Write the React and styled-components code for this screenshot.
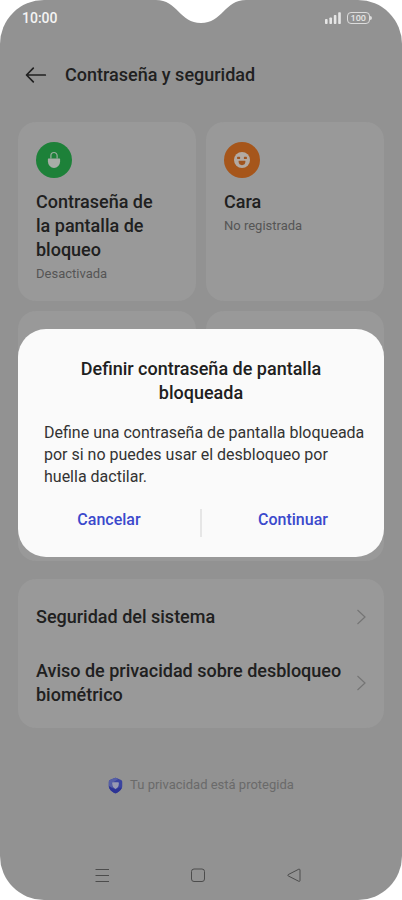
import styled, { createGlobalStyle } from "styled-components";

export default function App() {
  return (
    <>
      <GlobalStyle />
      <Screen>
        <Notch viewBox="0 0 100 24" aria-hidden="true">
          <path
            d="M5 0C26 0 29 23 50 23C71 23 74 0 95 0Z"
            fill="#fff"
          />
        </Notch>
        <StatusBar>
          <span>10:00</span>
          <StatusIcons>
            <Signal />
            <Battery>100</Battery>
          </StatusIcons>
        </StatusBar>
        <Header>
          <IconButton aria-label="Atrás">
            <ArrowLeft />
          </IconButton>
          <h1>Contraseña y seguridad</h1>
        </Header>
        <Main>
          <Grid>
            <MethodCard>
              <Round $color="#1d8139">
                <LockIcon />
              </Round>
              <h2>Contraseña de la pantalla de bloqueo</h2>
              <p>Desactivada</p>
            </MethodCard>
            <MethodCard>
              <Round $color="#a6561b">
                <FaceIcon />
              </Round>
              <h2>Cara</h2>
              <p>No registrada</p>
            </MethodCard>
            <Card />
            <Card />
            <WideCard />
          </Grid>
          <List>
            <Row href="#sistema">
              <span>Seguridad del sistema</span>
              <Chevron />
            </Row>
            <Row href="#privacidad">
              <span>Aviso de privacidad sobre desbloqueo biométrico</span>
              <Chevron />
            </Row>
          </List>
        </Main>
        <Privacy>
          <Shield />
          <span>Tu privacidad está protegida</span>
        </Privacy>
        <NavBar>
          <IconButton aria-label="Recientes">
            <svg width="16" height="16" viewBox="0 0 16 16" stroke="#4c4c4c">
              <path d="M1.5 2.5H15M1.5 8.5H15M1.5 14.5H15" />
            </svg>
          </IconButton>
          <IconButton aria-label="Inicio">
            <svg width="16" height="16" viewBox="0 0 16 16" fill="none" stroke="#4c4c4c">
              <rect x="1.5" y="2" width="13" height="12.5" rx="2.5" />
            </svg>
          </IconButton>
          <IconButton aria-label="Volver">
            <svg width="16" height="16" viewBox="0 0 16 16" fill="none" stroke="#4c4c4c">
              <path d="M12.8 2.2L2.2 7.6Q1.3 8.2 2.2 8.9L12.8 14.3Q14 14.6 14 13.5V3Q14 1.9 12.8 2.2Z" />
            </svg>
          </IconButton>
        </NavBar>
        <Overlay>
          <Dialog role="dialog" aria-labelledby="dialog-title">
            <h2 id="dialog-title">Definir contraseña de pantalla bloqueada</h2>
            <p>
              Define una contraseña de pantalla bloqueada por si no puedes usar
              el desbloqueo por huella dactilar.
            </p>
            <Actions>
              <ActionButton>Cancelar</ActionButton>
              <Divider />
              <ActionButton>Continuar</ActionButton>
            </Actions>
          </Dialog>
        </Overlay>
      </Screen>
    </>
  );
}

const Signal = () => (
  <svg width="16" height="12" viewBox="0 0 16 12" fill="#e6e6e6" aria-hidden="true">
    <rect x="0" y="7" width="2.6" height="5" rx="0.8" />
    <rect x="4.4" y="5.5" width="2.6" height="6.5" rx="0.8" />
    <rect x="8.8" y="3" width="2.6" height="9" rx="0.8" />
    <rect x="13.2" y="0.3" width="2.6" height="11.7" rx="0.8" />
  </svg>
);

const ArrowLeft = () => (
  <svg width="22" height="18" viewBox="0 0 22 18" fill="none" stroke="#202020" strokeWidth="1.7" strokeLinecap="round" strokeLinejoin="round">
    <path d="M20.3 9H1.8M8.3 2.2L1.5 9L8.3 15.8" />
  </svg>
);

const Chevron = () => (
  <svg width="10" height="16" viewBox="0 0 10 16" fill="none" stroke="#757575" strokeWidth="1.2" aria-hidden="true">
    <path d="M1.5 1L9 8L1.5 15" />
  </svg>
);

const LockIcon = () => (
  <svg width="16" height="18" viewBox="0 0 16 18" aria-hidden="true">
    <path d="M4.9 7.5V4.6A3.1 3.1 0 0 1 11.1 4.6V7.5" fill="none" stroke="#9aad9d" strokeWidth="1.2" />
    <path d="M2.4 7.6H13.6Q14.1 7.6 14.1 8.1V10.6A6.1 6.3 0 0 1 1.9 10.6V8.1Q1.9 7.6 2.4 7.6Z" fill="#a7ada7" />
  </svg>
);

const FaceIcon = () => (
  <svg width="16" height="16" viewBox="0 0 16 16" aria-hidden="true">
    <circle cx="8" cy="8" r="8" fill="#b3aaa3" />
    <g fill="#a0541f">
      <rect x="3.1" y="4.8" width="3" height="2.2" rx="0.6" />
      <rect x="9.9" y="4.8" width="3" height="2.2" rx="0.6" />
      <path d="M4.8 8.7H11.2Q11.5 8.7 11.4 9.6A3.4 3.6 0 0 1 4.6 9.6Q4.5 8.7 4.8 8.7Z" />
    </g>
  </svg>
);

const Shield = () => (
  <svg width="15" height="17" viewBox="0 0 16 18" aria-hidden="true">
    <path d="M7 .9Q8 .4 9 .9L14 3Q15.2 3.5 15.2 5V9.5C15.2 13 12 15.5 9 17Q8 17.5 7 17C4 15.5.8 13 .8 9.5V5Q.8 3.5 2 3Z" fill="#3b449f" />
    <path d="M1 5Q.9 3.6 2 3L7 .9Q8 .4 9 .9L11 2L4 6.5L5 12L2.7 13.3Q.8 11.4.8 9.5Z" fill="#555ea5" />
    <path d="M1 9.5L5 12L8 13.3L12 11L14.6 11.7C13.5 14.2 11 16 9 17Q8 17.5 7 17C4 15.5 1 13 1 9.5Z" fill="#2c3395" />
    <path d="M5.3 5.6H10.7Q11.8 5.6 11.6 6.8L11.2 9.4Q10.8 11 8 12.7Q5.2 11 4.8 9.4L4.4 6.8Q4.2 5.6 5.3 5.6Z" fill="#9799b2" />
  </svg>
);

const GlobalStyle = createGlobalStyle`
  * {
    box-sizing: border-box;
  }
  body {
    margin: 0;
    background: #fff;
    font-family: Roboto, "Liberation Sans", sans-serif;
  }
  h1, h2, p {
    margin: 0;
  }
  button {
    border: 0;
    padding: 0;
    background: none;
    font-family: inherit;
  }
  svg {
    display: block;
    flex-shrink: 0;
  }
`;

const Screen = styled.div`
  position: relative;
  display: flex;
  flex-direction: column;
  min-height: 100vh;
  overflow: hidden;
  border-radius: 44px;
  background: #929292;
  color: #202020;
`;

const Notch = styled.svg`
  position: absolute;
  top: 0;
  left: 50%;
  width: 100px;
  height: 24px;
  transform: translateX(-50%);
`;

const StatusBar = styled.div`
  display: flex;
  align-items: center;
  justify-content: space-between;
  height: 36px;
  padding: 0 32px 0 22px;
  color: #f4f4f4;
  font-size: 14px;
  font-weight: 500;
`;

const StatusIcons = styled.div`
  display: flex;
  align-items: center;
  gap: 6px;
`;

const Battery = styled.span`
  position: relative;
  padding: 0 3px;
  border: 1px solid #dcdcdc;
  border-radius: 4px;
  color: #e6e6e6;
  font-family: "Open Sans", sans-serif;
  font-size: 9px;
  font-weight: 600;
  line-height: 10px;

  &::after {
    content: "";
    position: absolute;
    top: 3px;
    right: -3px;
    width: 2px;
    height: 4px;
    border-radius: 0 2px 2px 0;
    background: #dcdcdc;
  }
`;

const IconButton = styled.button`
  display: flex;
  align-items: center;
  justify-content: center;
`;

const Header = styled.header`
  display: flex;
  align-items: center;
  gap: 18px;
  height: 78px;
  padding: 0 25px;

  h1 {
    font-size: 18px;
    font-weight: 500;
    line-height: 24px;
  }
`;

const Main = styled.main`
  display: flex;
  flex-direction: column;
  gap: 18px;
  padding: 8px 18px 0;
`;

const Grid = styled.div`
  display: grid;
  grid-template-columns: 1fr 1fr;
  grid-template-rows: auto 160px 80px;
  gap: 10px;
`;

const Card = styled.section`
  border-radius: 18px;
  background: #999;
`;

const WideCard = styled(Card)`
  grid-column: 1 / -1;
`;

const MethodCard = styled(Card)`
  padding: 20px 36px 16px 18px;

  h2 {
    margin-top: 12px;
    font-size: 18px;
    font-weight: 500;
    line-height: 24px;
  }

  p {
    margin-top: 1px;
    color: #555;
    font-size: 13px;
    line-height: 22px;
  }
`;

const Round = styled.div`
  display: flex;
  align-items: center;
  justify-content: center;
  width: 36px;
  height: 36px;
  border-radius: 50%;
  background: ${({ $color }) => $color};
`;

const List = styled(Card)`
  padding: 18px 18px 13px;
`;

const Row = styled.a`
  display: flex;
  align-items: center;
  justify-content: space-between;
  gap: 10px;
  padding: 8px 0;
  color: inherit;
  font-size: 18px;
  font-weight: 500;
  line-height: 24px;
  text-decoration: none;

  & + & {
    margin-top: 14px;
  }
`;

const Privacy = styled.footer`
  display: flex;
  align-items: center;
  justify-content: center;
  gap: 7px;
  margin-top: 45px;
  color: #6a6a6a;
  font-size: 13px;
  line-height: 24px;
`;

const NavBar = styled.nav`
  display: flex;
  align-items: center;
  justify-content: space-between;
  height: 50px;
  margin-top: auto;
  padding: 0 100px 0 94px;
`;

const Overlay = styled.div`
  position: absolute;
  inset: 0;
  display: flex;
  align-items: center;
  justify-content: center;
  padding: 0 18px 14px;
`;

const Dialog = styled.div`
  width: 100%;
  padding: 28px 0 20px;
  border-radius: 28px;
  background: #fafafa;

  h2 {
    padding: 0 50px;
    font-size: 18px;
    font-weight: 500;
    line-height: 24px;
    text-align: center;
  }

  p {
    margin-top: 17px;
    padding: 0 18px 0 26px;
    color: #333;
    font-size: 16px;
    line-height: 22px;
  }
`;

const Actions = styled.div`
  display: flex;
  align-items: flex-end;
  margin-top: 21px;
`;

const ActionButton = styled.button`
  flex: 1;
  padding-bottom: 7px;
  color: #3b49cc;
  font-size: 16px;
  font-weight: 500;
  line-height: 20px;
`;

const Divider = styled.span`
  width: 2px;
  height: 28px;
  background: #e6e6e6;
`;
